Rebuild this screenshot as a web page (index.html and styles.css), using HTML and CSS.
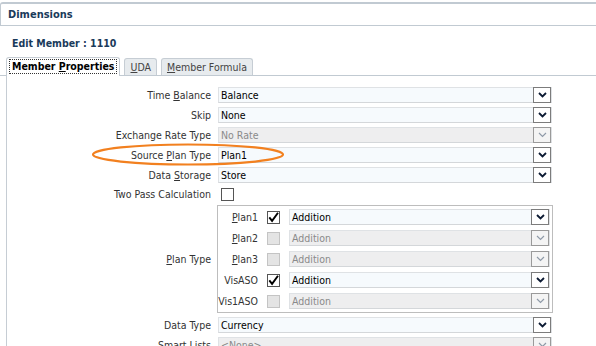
FILE: index.html
```html
<!DOCTYPE html>
<html lang="en">
<head>
    <meta charset="UTF-8">
    <title>Dimensions - Edit Member</title>
    <link rel="stylesheet" href="styles.css">
</head>
<body>
    <div class="dlg-head">Dimensions</div>

    <div class="dlg-body">
        <div class="edit-title">Edit Member : 1110</div>

        <div class="tabs">
            <div class="tab active"><span class="focus">Member <u>P</u>roperties</span></div>
            <div class="tab"><u>U</u>DA</div>
            <div class="tab"><u>M</u>ember Formula</div>
        </div>

        <div class="tab-panel">
            <div class="form">
                <label>Time <u>B</u>alance</label>
                <div class="sel"><span>Balance</span><i class="dd"><svg width="9" height="6" viewBox="0 0 9 6"><path d="M1 1l3.5 3.5L8 1"/></svg></i></div>

                <label>Skip</label>
                <div class="sel"><span>None</span><i class="dd"><svg width="9" height="6" viewBox="0 0 9 6"><path d="M1 1l3.5 3.5L8 1"/></svg></i></div>

                <label>Exchange Rate Type</label>
                <div class="sel off"><span>No Rate</span><i class="dd"><svg width="9" height="6" viewBox="0 0 9 6"><path d="M1 1l3.5 3.5L8 1"/></svg></i></div>

                <label>Source <u>P</u>lan Type</label>
                <div class="sel"><span>Plan1</span><i class="dd"><svg width="9" height="6" viewBox="0 0 9 6"><path d="M1 1l3.5 3.5L8 1"/></svg></i></div>

                <label>Data <u>S</u>torage</label>
                <div class="sel"><span>Store</span><i class="dd"><svg width="9" height="6" viewBox="0 0 9 6"><path d="M1 1l3.5 3.5L8 1"/></svg></i></div>

                <label class="short">Two Pass Calculation</label>
                <div class="short"><span class="chk"></span></div>

                <label class="mid"><u>P</u>lan Type</label>
                <div class="group">
                    <label><u>P</u>lan1</label>
                    <span class="chk on"><svg width="11" height="11" viewBox="0 0 11 11"><path d="M1.3 5.3l2.8 3.6L10 0.8"/></svg></span>
                    <div class="sel"><span>Addition</span><i class="dd"><svg width="9" height="6" viewBox="0 0 9 6"><path d="M1 1l3.5 3.5L8 1"/></svg></i></div>

                    <label><u>P</u>lan2</label>
                    <span class="chk off"></span>
                    <div class="sel off"><span>Addition</span><i class="dd"><svg width="9" height="6" viewBox="0 0 9 6"><path d="M1 1l3.5 3.5L8 1"/></svg></i></div>

                    <label><u>P</u>lan3</label>
                    <span class="chk off"></span>
                    <div class="sel off"><span>Addition</span><i class="dd"><svg width="9" height="6" viewBox="0 0 9 6"><path d="M1 1l3.5 3.5L8 1"/></svg></i></div>

                    <label>VisASO</label>
                    <span class="chk on"><svg width="11" height="11" viewBox="0 0 11 11"><path d="M1.3 5.3l2.8 3.6L10 0.8"/></svg></span>
                    <div class="sel"><span>Addition</span><i class="dd"><svg width="9" height="6" viewBox="0 0 9 6"><path d="M1 1l3.5 3.5L8 1"/></svg></i></div>

                    <label>Vis1ASO</label>
                    <span class="chk off"></span>
                    <div class="sel off"><span>Addition</span><i class="dd"><svg width="9" height="6" viewBox="0 0 9 6"><path d="M1 1l3.5 3.5L8 1"/></svg></i></div>
                </div>

                <label>Data Type</label>
                <div class="sel"><span>Currency</span><i class="dd"><svg width="9" height="6" viewBox="0 0 9 6"><path d="M1 1l3.5 3.5L8 1"/></svg></i></div>

                <label>Smart Lists</label>
                <div class="sel off"><span>&lt;None&gt;</span><i class="dd"><svg width="9" height="6" viewBox="0 0 9 6"><path d="M1 1l3.5 3.5L8 1"/></svg></i></div>
            </div>
        </div>

        <!-- annotation drawn over the Source Plan Type row -->
        <svg class="mark" width="200" height="26" viewBox="0 0 200 26">
            <ellipse cx="97" cy="12.5" rx="95" ry="10" />
        </svg>
    </div>
</body>
</html>
```

FILE: styles.css
```css
body {
    margin: 0;
    height: 346px;
    overflow: hidden;
    font-family: "DejaVu Sans Condensed", "DejaVu Sans", sans-serif;
    font-stretch: condensed;
    font-size: 10.5px;
    color: #333;
    background: #fff;
}
u {
    text-decoration: underline;
    text-underline-offset: 1px;
}
.dlg-head {
    margin-top: 2px;
    height: 21px;
    line-height: 21px;
    padding-left: 7px;
    border-top: 2px solid #c1cad2;
    border-left: 1px solid #c1cad2;
    border-bottom: 1px solid #c1cad2;
    border-top-left-radius: 3px;
    font-size: 11px;
    font-weight: bold;
    color: #1a3a5a;
}
.dlg-body {
    position: relative;
}
.edit-title {
    padding: 11px 0 0 12px;
    height: 18px;
    font-size: 10.5px;
    font-weight: bold;
    color: #1a3a5a;
}
.tabs {
    display: flex;
    gap: 4px;
    padding-left: 6px;
    margin-top: 2px;
    height: 18px;
    border-bottom: 1px solid #c1cad2;
}
.tab {
    margin-top: 1px;
    padding: 0 5px;
    height: 17px;
    line-height: 16px;
    border: 1px solid #c6cdd4;
    border-bottom: none;
    border-top-left-radius: 3px;
    border-top-right-radius: 3px;
    background: #e7ebee;
    color: #444;
    box-sizing: border-box;
}
.tab.active {
    margin-top: 0;
    height: 19px;
    padding: 0 2px;
    background: #fff;
    color: #000;
    font-weight: bold;
}
.focus {
    display: inline-block;
    line-height: 13px;
    margin-top: 1px;
    padding: 0 2px;
    border: 1px dotted #333;
}
.tab-panel {
    border-left: 1px solid #c6cdd4;
    margin-left: 6px;
    padding-top: 11px;
}
.form {
    display: grid;
    grid-template-columns: 204px 334px;
    column-gap: 7px;
    row-gap: 4px;
    align-items: center;
}
.form > label {
    text-align: right;
    line-height: 16px;
    color: #333;
}
.form > .short {
    height: 13px;
    line-height: 13px;
    margin-top: 1px;
}
.form > .short .chk {
    margin-left: 3px;
}
.sel {
    height: 16px;
    box-sizing: border-box;
    display: flex;
    align-items: center;
    border: 1px solid #dfe2e5;
    border-bottom-color: #d4d7da;
    background: #f6fafd;
    color: #000;
}
.sel span {
    flex: 1;
    padding-left: 2px;
    line-height: 14px;
}
.sel.off {
    background: #eeeeef;
    color: #8a8a8a;
}
.dd {
    width: 18px;
    height: 16px;
    margin: -1px 0;
    box-sizing: border-box;
    display: flex;
    align-items: center;
    justify-content: center;
    border: 1px solid #7c7c7c;
    background: #fff;
}
.dd svg path {
    fill: none;
    stroke: #0c1a33;
    stroke-width: 1.8;
}
.sel.off .dd {
    border-color: #9a9a9a;
    background: #f4f4f4;
}
.sel.off .dd svg path {
    stroke: #8f9aa8;
    stroke-width: 1.2;
}
.chk {
    display: inline-flex;
    align-items: center;
    justify-content: center;
    width: 13px;
    height: 13px;
    box-sizing: border-box;
    border: 1px solid #555;
    background: #fff;
    vertical-align: top;
}
.chk svg path {
    fill: none;
    stroke: #000;
    stroke-width: 1.9;
}
.chk.off {
    border-color: #c4c4c4;
    background: #e4e4e4;
}
.group {
    margin: 0 -1px;
    padding: 3px 3px 3px 0;
    border: 1px solid #bdbdbd;
    display: grid;
    grid-template-columns: 40px 13px 261px;
    column-gap: 9px;
    row-gap: 5px;
    align-items: center;
}
.group > label {
    text-align: right;
    line-height: 16px;
}
.mark {
    position: absolute;
    left: 91px;
    top: 116px;
    overflow: visible;
}
.mark ellipse {
    fill: none;
    stroke: #f2801f;
    stroke-width: 2.2;
}
```
